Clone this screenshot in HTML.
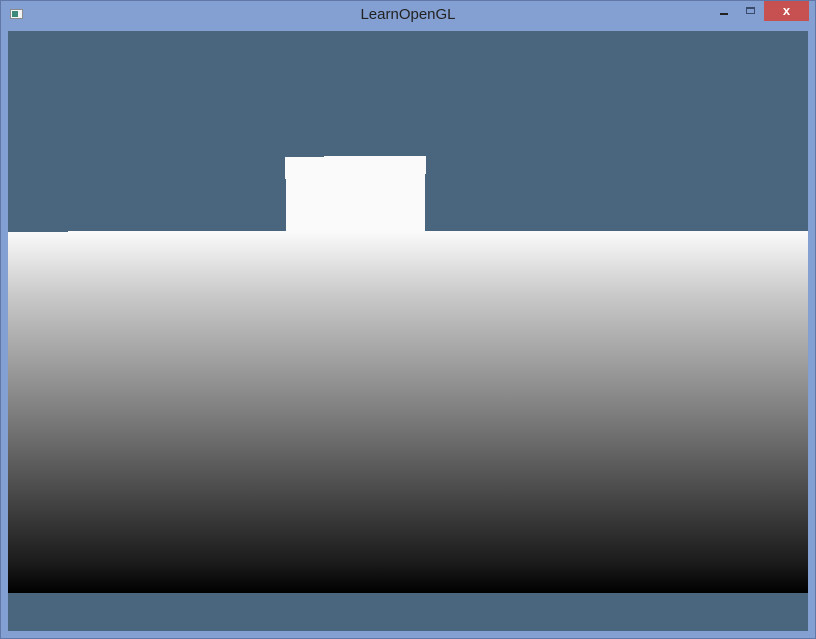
<!DOCTYPE html>
<html><head><meta charset="utf-8"><style>
html,body{margin:0;padding:0;}
body{width:816px;height:639px;position:relative;overflow:hidden;background:#84a0d2;font-family:"Liberation Sans",sans-serif;}
.b{position:absolute;}
</style></head><body>
<div class="b" style="left:0;top:0;width:814px;height:637px;border:1px solid #5f78a8;"></div>
<div class="b" style="left:10px;top:9px;width:13px;height:10px;background:#f4f4f4;border:1px solid #8a8a8a;box-sizing:border-box;"></div>
<div class="b" style="left:12px;top:11px;width:6px;height:6px;background:#3d8a7a;"></div>
<div class="b" style="left:0;top:6px;width:816px;text-align:center;font-size:15px;color:#222;">LearnOpenGL</div>
<div class="b" style="left:720px;top:13px;width:8px;height:2px;background:#222;"></div>
<div class="b" style="left:746px;top:7px;width:9px;height:7px;border:1px solid #3a4a6a;border-top-width:2px;box-sizing:border-box;"></div>
<div class="b" style="left:764px;top:1px;width:45px;height:20px;background:#c75050;color:#fff;font-size:13px;font-weight:bold;text-align:center;line-height:20px;">x</div>
<div class="b" style="left:8px;top:31px;width:800px;height:600px;background:#4a657e;"></div>
<div class="b" style="left:8px;top:232px;width:800px;height:361px;background:linear-gradient(#fafafa,#c8c8c8 18%,#8a8a8a 45%,#4a4a4a 72%,#1a1a1a 92%,#000);"></div>
<div class="b" style="left:68px;top:231px;width:740px;height:1px;background:#fafafa;"></div>
<div class="b" style="left:285px;top:157px;width:40px;height:22px;background:#fafafa;"></div>
<div class="b" style="left:324px;top:156px;width:102px;height:18px;background:#fafafa;"></div>
<div class="b" style="left:286px;top:170px;width:139px;height:62px;background:#fafafa;"></div>
</body></html>
